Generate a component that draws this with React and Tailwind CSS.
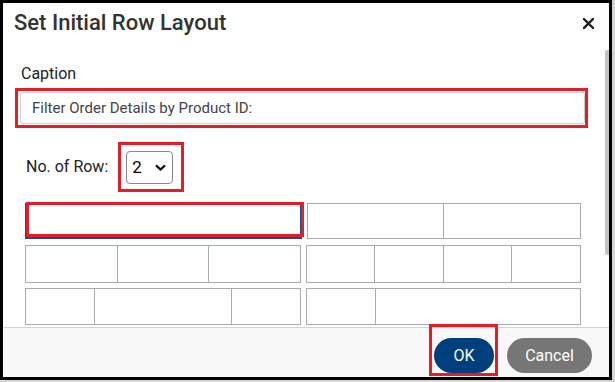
import React from "react";

const font = { fontFamily: "Roboto, 'Liberation Sans', sans-serif" };

function Cell({ className = "" }) {
  return <div className={"h-full border-l border-[#aaaaaa] first:border-l-0 " + className} />;
}

function Block({ children }) {
  return <div className="flex h-full flex-1 border border-[#aaaaaa]">{children}</div>;
}

function App() {
  return (
    <div className="w-[615px] h-[382px] bg-[#d6d6d6] overflow-hidden" style={font}>
      <div className="w-[612px] h-[380px] bg-black pt-[3px] pl-[3px]">
        <div className="relative flex h-[374px] w-[606px] flex-col bg-white">
          {/* header */}
          <div className="flex items-center justify-between pl-[11px] pr-[15px] pt-[6px]">
            <h1 className="text-[22px] font-medium leading-[28px] text-[#333333]">Set Initial Row Layout</h1>
            <svg width="11" height="11" viewBox="0 0 11 11" className="mt-[1px]">
              <path d="M1 1 L10 10 M10 1 L1 10" stroke="#1e1e1e" strokeWidth="2.4" strokeLinecap="square" />
            </svg>
          </div>

          {/* body */}
          <div className="flex-1 overflow-hidden px-[12px] pt-[27px]">
            <div className="pl-[6px] text-[16px] leading-[20px] text-[#222222]">Caption</div>
            <div className="mt-[4px] h-[40px] w-[573px] border-[3px] border-[#e41e26] py-[1px] pl-[2px]">
              <div className="flex h-full items-center rounded-[3px] border border-[#cccccc] pl-[11px] text-[15px] text-[#444444]">
                Filter Order Details by Product ID:
              </div>
            </div>

            <div className="mt-[14px] flex items-center pl-[11px]">
              <span className="text-[16px] text-[#222222]">No. of Row:</span>
              <div className="ml-[10px] h-[50px] w-[66px] border-[3px] border-[#e41e26] pl-[5px] pt-[6px]">
                <div className="flex h-[33px] w-[47px] items-center rounded-[4px] border border-[#8a8a8a] pl-[5px] pr-[6px]">
                  <span className="text-[17px] text-black">2</span>
                  <svg width="11" height="7" viewBox="0 0 11 7" className="ml-auto">
                    <path d="M1 1.3 L5.5 5.5 L10 1.3" fill="none" stroke="#111" strokeWidth="2.3" />
                  </svg>
                </div>
              </div>
            </div>

            <div className="mt-[11px] flex flex-col gap-[5px] pl-[10px] pr-[16px]">
              <div className="flex h-[36px] gap-[5px]">
                <div className="relative h-full flex-1 border-2 border-[#1f4c86]">
                  <div className="absolute -left-[1px] -top-[3px] -right-[4px] bottom-0 border-[3px] border-[#e41e26]" />
                </div>
                <Block>
                  <Cell className="flex-1" />
                  <Cell className="flex-1" />
                </Block>
              </div>
              <div className="mt-[1px] flex h-[38px] gap-[5px]">
                <Block>
                  <Cell className="flex-1" />
                  <Cell className="flex-1" />
                  <Cell className="flex-1" />
                </Block>
                <Block>
                  <Cell className="flex-1" />
                  <Cell className="flex-1" />
                  <Cell className="flex-1" />
                  <Cell className="flex-1" />
                </Block>
              </div>
              <div className="flex h-[37px] gap-[5px]">
                <Block>
                  <Cell className="flex-1" />
                  <Cell className="flex-[2]" />
                  <Cell className="flex-1" />
                </Block>
                <Block>
                  <Cell className="flex-1" />
                  <Cell className="flex-[3]" />
                </Block>
              </div>
            </div>
          </div>

          {/* footer */}
          <div className="flex h-[50px] items-start justify-end gap-[13px] border-t border-[#d4d4d4] bg-[#f8f8f8] pr-[17px] pt-[10px]">
            <div className="relative">
              <button className="h-[35px] w-[60px] rounded-full bg-[#003f7d] text-[16px] text-white">OK</button>
              <div className="absolute -left-[5px] -right-[4px] -top-[14px] -bottom-[3px] border-[3px] border-[#e41e26]" />
            </div>
            <button className="h-[35px] w-[85px] rounded-full bg-[#767676] text-[16px] text-white">Cancel</button>
          </div>

          {/* scrollbar thumb */}
          <div className="absolute right-0 top-[47px] h-[205px] w-[4px] rounded-l-[2px] bg-[#c4c4c4]" />
        </div>
      </div>
    </div>
  );
}

export default App;
